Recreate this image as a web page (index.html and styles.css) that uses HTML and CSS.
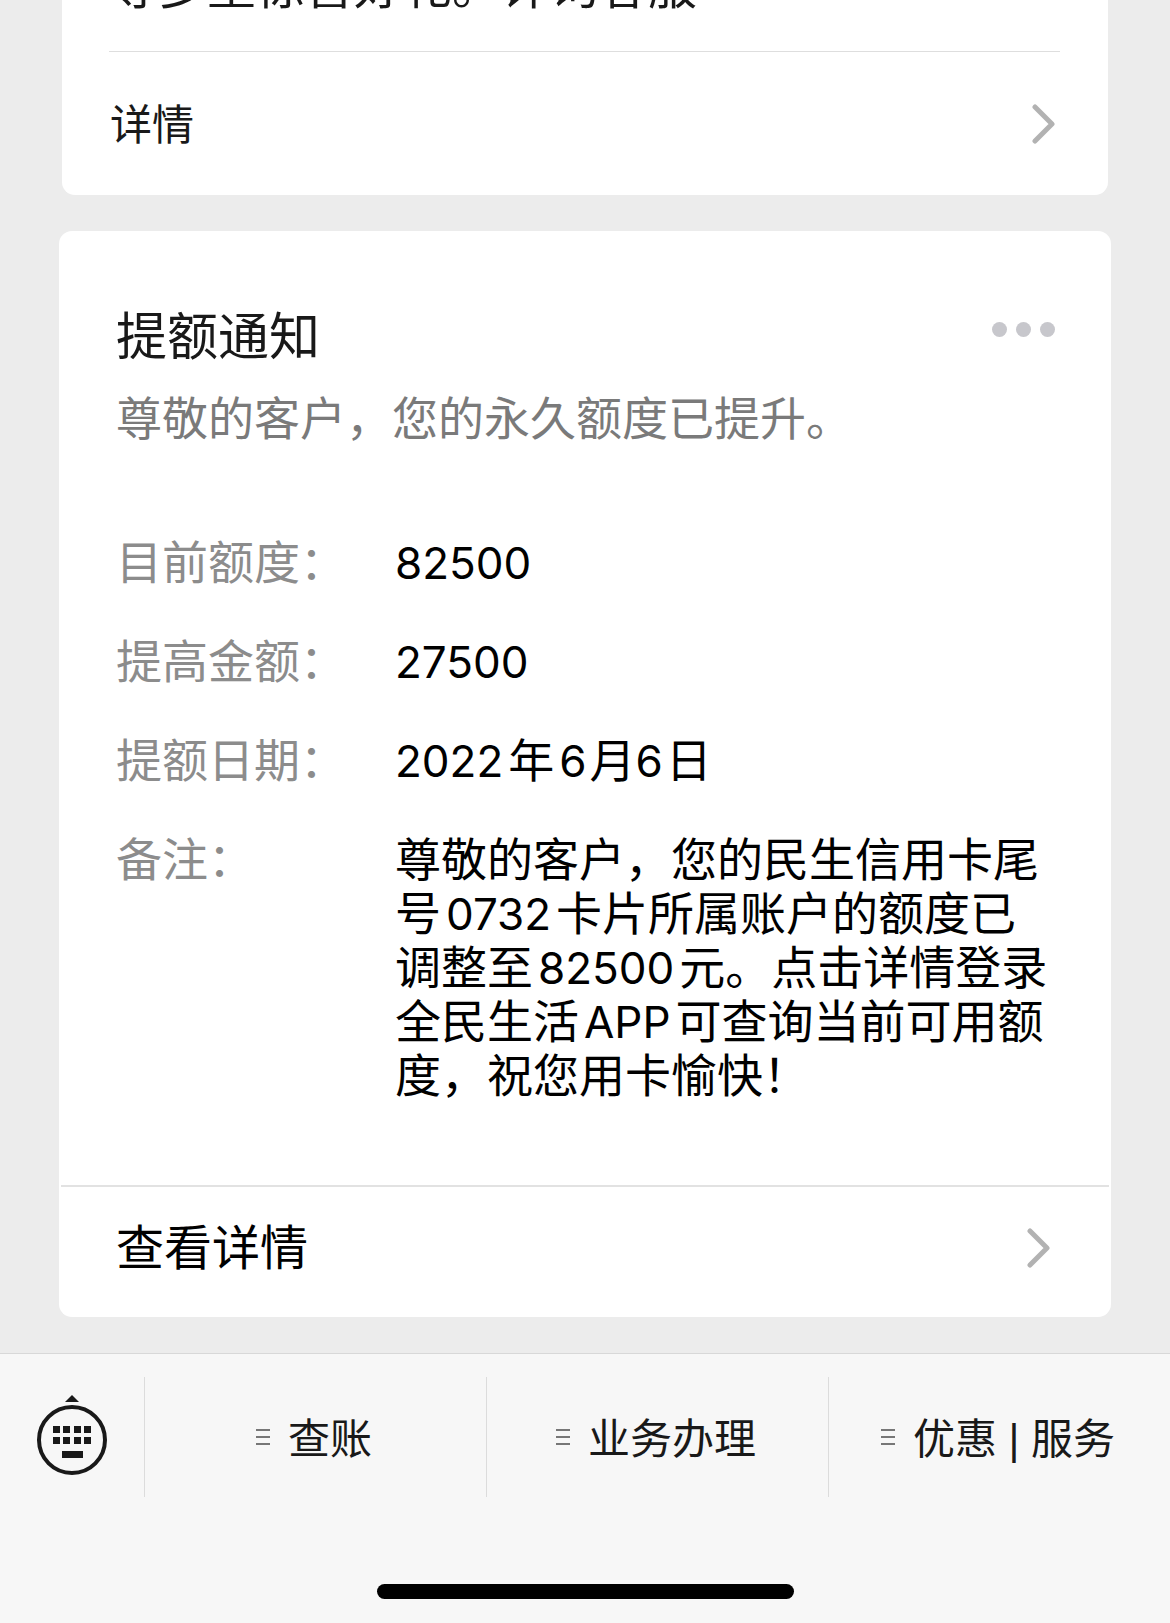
FILE: index.html
```html
<!DOCTYPE html>
<html lang="zh-CN">
<head>
<meta charset="utf-8">
<meta name="viewport" content="width=device-width, initial-scale=1">
<title>提额通知</title>
<link rel="stylesheet" href="styles.css">
</head>
<body>
<main class="chat">
  <article class="card card-previous">
    <p class="promo">等多重惊喜好礼。详询客服</p>
    <a class="card-link card-link-small" href="#">
      <span class="label">详情</span>
      <svg class="chevron" viewBox="0 0 24 40" aria-hidden="true"><path d="M4 3 L21 20 L4 37"/></svg>
    </a>
  </article>
  <article class="card card-notice">
    <div class="notice">
      <header class="notice-head">
        <h1 class="title">提额通知</h1>
        <button class="more" type="button" aria-label="更多"><i></i><i></i><i></i></button>
      </header>
      <p class="subtitle">尊敬的客户，您的永久额度已提升。</p>
      <dl class="details">
        <dt>目前额度：</dt>
        <dd><span class="latin">82500</span></dd>
        <dt>提高金额：</dt>
        <dd><span class="latin">27500</span></dd>
        <dt>提额日期：</dt>
        <dd><span class="latin">2022</span><span class="latin-gap">年</span><span class="latin latin-month">6</span>月<span class="latin latin-month">6</span>日</dd>
        <dt>备注：</dt>
        <dd>尊敬的客户，您的民生信用卡尾号<span class="latin latin-gap">0732</span>卡片所属账户的额度已调整至<span class="latin latin-gap">82500</span>元。点击详情登录全民生活<span class="latin latin-gap">APP</span>可查询当前可用额度，祝您用卡愉快！</dd>
      </dl>
    </div>
    <a class="card-link card-link-large" href="#">
      <span class="label">查看详情</span>
      <svg class="chevron" viewBox="0 0 24 40" aria-hidden="true"><path d="M4 3 L21 20 L4 37"/></svg>
    </a>
  </article>
</main>
<footer class="dock">
  <nav class="menu">
    <button class="keyboard" type="button" aria-label="键盘">
      <svg viewBox="0 0 72 84" aria-hidden="true">
        <path d="M36 0 L43 7 H29 Z"/>
        <circle cx="36" cy="45" r="33" fill="none" stroke="#191919" stroke-width="4"/>
        <path d="M17 31h7v7h-7z M27 31h7v7h-7z M38 31h7v7h-7z M48 31h7v7h-7z M17 42h7v7h-7z M27 42h7v7h-7z M38 42h7v7h-7z M48 42h7v7h-7z M26 56h21v7h-21z"/>
      </svg>
    </button>
    <button class="menu-item" type="button"><i class="lines"></i><span class="label">查账</span></button>
    <button class="menu-item" type="button"><i class="lines"></i><span class="label">业务办理</span></button>
    <button class="menu-item" type="button"><i class="lines"></i><span class="label">优惠 | 服务</span></button>
  </nav>
  <div class="home-indicator"></div>
</footer>
</body>
</html>
```
FILE: styles.css
```css
* {
  box-sizing: border-box;
}

body {
  margin: 0;
  height: 100vh;
  display: flex;
  flex-direction: column;
  background: #ececec;
  color: #000;
  font-family: "Noto Sans CJK SC", sans-serif;
}

h1, p, dl, dd {
  margin: 0;
}

button {
  border: 0;
  padding: 0;
  background: none;
  color: inherit;
  font: inherit;
}

/* Conversation, scrolled to its latest message */
.chat {
  flex: 1;
  min-height: 0;
  overflow: hidden;
  display: flex;
  flex-direction: column;
  justify-content: flex-end;
  gap: 36px;
  padding: 0 59px 36px;
}

.card {
  flex: none;
  background: #fff;
  border-radius: 13px;
}

.card-previous {
  margin: 0 3px;
  padding: 0 48px 0 47px;
  color: #191919;
}

.promo {
  padding-bottom: 32px;
  border-bottom: 1px solid #dedede;
  font-size: 49px;
  line-height: 72px;
}

.card-link {
  display: flex;
  align-items: center;
  justify-content: space-between;
  color: inherit;
  text-decoration: none;
}

.label {
  padding-bottom: 4px;
}

.card-link-small {
  height: 143px;
  padding: 0 5px 0 1px;
  font-size: 42px;
}

.card-link-large {
  height: 132px;
  margin: 0 2px;
  padding: 0 59px 8px 55px;
  border-top: 2px solid #e2e2e2;
  font-size: 48px;
}

.card-link-large .label {
  padding-bottom: 8px;
}

.chevron {
  width: 24px;
  height: 40px;
  fill: none;
  stroke: #b2b2b2;
  stroke-width: 5;
  stroke-linecap: round;
  stroke-linejoin: round;
}

.notice {
  padding: 70px 56px 86px 57px;
}

.notice-head {
  display: flex;
  align-items: center;
  justify-content: space-between;
  margin-bottom: 23px;
}

.title {
  color: #191919;
  font-size: 51px;
  font-weight: 400;
  line-height: 64px;
}

.more {
  display: flex;
  gap: 9px;
  padding-bottom: 8px;
}

.more i {
  width: 15px;
  height: 15px;
  border-radius: 50%;
  background: #c7c7cc;
}

.subtitle {
  color: #7a7a7a;
  font-size: 46px;
  line-height: 54px;
}

.details {
  display: grid;
  grid-template-columns: 279px 1fr;
  row-gap: 45px;
  margin-top: 90px;
  font-size: 46px;
  line-height: 54px;
}

.details dt {
  color: #8c8c8c;
}

.latin {
  font-family: Inter, sans-serif;
  font-size: 44px;
  line-height: 1;
}

.latin-gap {
  margin: 0 5px;
}

.latin-month {
  margin-right: 3px;
}

/* Bottom menu */
.dock {
  padding: 23px 0 24px;
  border-top: 1px solid #d8d8d8;
  background: #f7f7f7;
}

.menu {
  display: grid;
  grid-template-columns: 144px repeat(3, 1fr);
  height: 120px;
  color: #191919;
}

.keyboard svg {
  display: block;
  width: 72px;
  height: 84px;
  margin: 0 auto;
  fill: #191919;
}

.menu-item {
  display: flex;
  align-items: center;
  justify-content: center;
  gap: 18px;
  padding-right: 3px;
  border-left: 1px solid #dcdcdc;
  font-family: "Liberation Sans", "Noto Sans CJK SC", sans-serif;
  font-size: 42px;
}

.lines {
  width: 14px;
  height: 16px;
  background: repeating-linear-gradient(#777 0 2px, transparent 2px 7px);
}

.home-indicator {
  width: 36%;
  max-width: 417px;
  height: 15px;
  margin: 87px auto 0;
  border-radius: 8px;
  background: #000;
}
```
